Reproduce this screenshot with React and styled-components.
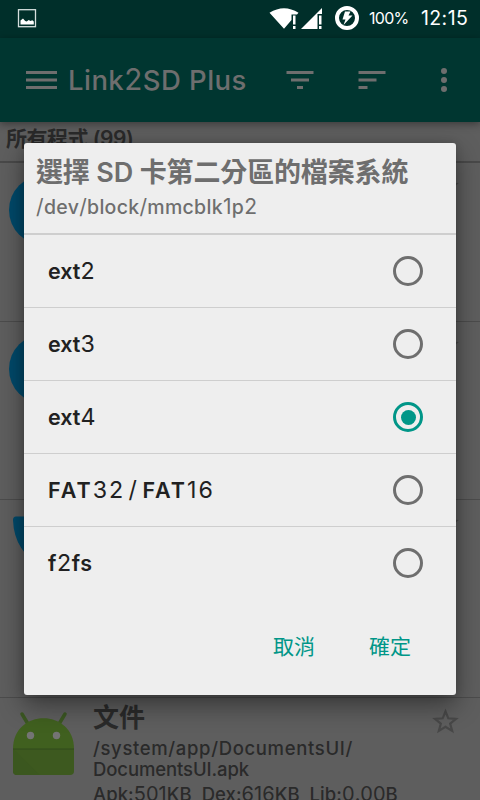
import React, { useState } from "react";
import styled, { createGlobalStyle } from "styled-components";

const GlobalStyle = createGlobalStyle`
  * {
    box-sizing: border-box;
  }
  body {
    margin: 0;
    overflow: hidden;
    font-family: Inter, "Noto Sans CJK TC", sans-serif;
  }
`;

const Screen = styled.div`
  position: relative;
  width: 480px;
  height: 800px;
  overflow: hidden;
  background: #5e5e5e;
`;

const StatusBar = styled.div`
  height: 38px;
  display: flex;
  align-items: center;
  padding: 0 11px 2px 17px;
  background: #002f2a;
  color: #fff;
`;

const StatusIcons = styled.div`
  display: flex;
  flex: 1;
  justify-content: flex-end;
  margin-right: 10px;
`;

const Battery = styled.span`
  width: 40px;
  margin-right: 12px;
  font-size: 16px;
  letter-spacing: -0.7px;
  white-space: nowrap;
`;

const Clock = styled.span`
  width: 48px;
  font-size: 19.5px;
  letter-spacing: 0.4px;
  white-space: nowrap;
`;

const Toolbar = styled.div`
  position: relative;
  height: 84px;
  display: flex;
  align-items: center;
  padding: 0 22px 0 26px;
  background: #003630;
  color: #6e6e6e;
  box-shadow: 0 2px 8px rgba(0, 0, 0, 0.4);
`;

const AppTitle = styled.div`
  flex: 1;
  margin-left: 11px;
  font-size: 27.5px;
  font-weight: 500;
  letter-spacing: 0.45px;
  white-space: nowrap;
`;

const Actions = styled.div`
  display: flex;
  align-items: center;
  gap: 44px;
`;

// digits are taller and thinner than the letters
const Digits = styled.span`
  font-size: 1.08em;
  font-weight: 400;
  line-height: 0;
`;

const SectionTitle = styled.div`
  height: 41px;
  padding: 1px 6px 0;
  border-bottom: 2px solid #494949;
  color: #2a2a2a;
  font-size: 21px;
  font-weight: 600;
  line-height: 32px;
  letter-spacing: -0.5px;
`;

const AppRow = styled.div`
  height: ${(props) => props.$height};
  display: flex;
  align-items: flex-start;
  padding: 8px 21px 0 9px;
  border-bottom: 1px solid #4c4c4c;
`;

const AppInfo = styled.div`
  flex: 1;
  margin-left: 14px;
  color: #2a2a2a;
  white-space: nowrap;
`;

const AppName = styled.div`
  height: 34px;
  margin-top: -4px;
  font-size: 26px;
  font-weight: 600;
  line-height: 31px;
`;

const AppLine = styled.div`
  height: ${(props) => props.$height || "21px"};
  font-size: 18.5px;
  font-weight: 500;
  line-height: 24px;
  letter-spacing: ${(props) => props.$spacing};
  white-space: pre;
`;

const StarBox = styled.div`
  width: 28px;
  height: 28px;
`;

const Dialog = styled.div`
  position: absolute;
  top: 143px;
  left: 24px;
  width: 432px;
  height: 552px;
  display: flex;
  flex-direction: column;
  border-radius: 3px;
  background: #eee;
  box-shadow: 0 10px 26px rgba(0, 0, 0, 0.42), 0 0 8px rgba(0, 0, 0, 0.15);
`;

const DialogHeader = styled.div`
  height: 92px;
  padding: 9px 12px 0;
  border-bottom: 2px solid #cecece;
  color: #6e6e6e;
  white-space: nowrap;
`;

const DialogTitle = styled.div`
  height: 41px;
  font-size: 27px;
  font-weight: 600;
  line-height: 42px;
  letter-spacing: -0.15px;
`;

const DialogPath = styled.div`
  font-size: 19.5px;
  font-weight: 500;
  line-height: 28px;
  letter-spacing: 0.3px;
`;

const Option = styled.div`
  height: 73px;
  display: flex;
  align-items: center;
  justify-content: space-between;
  padding: 0 33px 0 24px;
  border-bottom: 1px solid ${(props) => (props.$last ? "transparent" : "#cecece")};
  color: #212121;
  font-size: 21.5px;
  font-weight: 600;
  letter-spacing: ${(props) => props.$spacing};
  word-spacing: -4px;
  white-space: pre;
`;

const Radio = styled.span`
  width: 30px;
  height: 30px;
  display: grid;
  place-items: center;
  border: 3px solid ${(props) => (props.$checked ? "#009688" : "#6e6e6e")};
  border-radius: 50%;

  &::after {
    content: "";
    width: 15px;
    height: 15px;
    border-radius: 50%;
    background: ${(props) => (props.$checked ? "#009688" : "transparent")};
  }
`;

const Buttons = styled.div`
  display: flex;
  justify-content: flex-end;
  gap: 54px;
  padding: 27px 45px 0 0;
`;

const Button = styled.button`
  padding: 0;
  border: 0;
  background: none;
  color: #009688;
  font: 400 21px/36px "Noto Sans CJK TC", sans-serif;
`;

function Label({ text }) {
  return (
    <span>
      {text.split(/([\d/]+)/).map((part, i) =>
        /[\d/]/.test(part) ? <Digits key={i}>{part}</Digits> : part
      )}
    </span>
  );
}

function PictureIcon() {
  return (
    <svg width="20" height="20" viewBox="0 -1 20 20">
      <rect x="1.5" y="0.7" width="17" height="17" fill="none" stroke="#d5dfde" strokeWidth="1.3" />
      <path d="M3.500 15.500V11.500L6 9.500l2.200 2.500 1.500.5 2-1.500 1.800 1 1.800-.8 1.500 1.300v3z" fill="#fff" />
    </svg>
  );
}

function SignalIcons() {
  return (
    <svg width="90" height="26" viewBox="269 5 90 26" fill="#fff">
      <path d="M269.500 12.800Q284 3.800 298.500 12.800L297 14.500H291.500V20L284 28.800z" />
      <rect x="293" y="15.500" width="2.500" height="9" />
      <rect x="293" y="26" width="2.500" height="3" />
      <path d="M301 29L322 8V14H317.500V29z" />
      <rect x="319" y="15.500" width="2.500" height="9" />
      <rect x="319" y="26" width="2.500" height="3" />
      <circle cx="347" cy="18" r="10" fill="none" stroke="#fff" strokeWidth="4" />
      <path d="M345 11.500H350.500L348.500 15.500H352.500L343.500 25L345.500 19.500H342.500z" />
    </svg>
  );
}

function MenuIcon() {
  return (
    <svg width="31" height="18" fill="#6e6e6e">
      <path d="M0 0h31v3H0zM0 7.500h31v3H0zM0 15h31v3H0z" />
    </svg>
  );
}

function FilterIcon() {
  return (
    <svg width="28" height="18" fill="#6e6e6e">
      <path d="M.5 0h27v3H.5zM5 7.500h18v3H5zM11 15h6v3H11z" />
    </svg>
  );
}

function SortIcon() {
  return (
    <svg width="28" height="18" fill="#6e6e6e">
      <path d="M.5 0h27v3H.5zM.5 7.500h18v3H.5zM.5 15h9v3H.5z" />
    </svg>
  );
}

function MoreIcon() {
  return (
    <svg width="28" height="24" fill="#6e6e6e">
      <circle cx="14" cy="3" r="3" />
      <circle cx="14" cy="12" r="3" />
      <circle cx="14" cy="21" r="3" />
    </svg>
  );
}

function StarIcon() {
  return (
    <StarBox>
      <svg width="28" height="28" viewBox="0 0 28 28">
        <path
          d="M14.500 5.500L17.300 12.300L25 12.900L19.200 17.700L21.200 24.900L14.500 20.900L7.800 24.900L9.800 17.700L4 12.900L11.700 12.300Z"
          fill="none"
          stroke="#484848"
          strokeWidth="2.200"
        />
      </svg>
    </StarBox>
  );
}

function BlueIcon() {
  return (
    <svg width="70" height="80">
      <circle cx="35" cy="39" r="35" fill="#00496a" />
    </svg>
  );
}

function ShieldIcon() {
  return (
    <svg width="70" height="80">
      <path d="M7 8.500H63Q66 8.500 65.500 13Q63 44 35 60Q5 44 4 12Q4 8.500 7 8.500z" fill="#00496a" />
    </svg>
  );
}

function AndroidIcon() {
  return (
    <svg width="70" height="80" viewBox="9 706 70 80">
      <path d="M22 714L28 724M65 714L59 724" stroke="#3b5722" strokeWidth="3.500" strokeLinecap="round" />
      <path d="M13 749C13 708 74 708 74 749z" fill="#40601f" />
      <path d="M13 749H74V771Q74 775 70 775H17Q13 775 13 771z" fill="#3d591f" />
      <path d="M13 749L40 775H17Q13 775 13 771z" fill="#3b571f" />
      <path d="M13 749H74" stroke="#304a1c" strokeWidth="1" />
      <circle cx="30.500" cy="735.500" r="3.700" fill="#747474" />
      <circle cx="56.500" cy="735.500" r="3.700" fill="#747474" />
    </svg>
  );
}

const options = [
  { name: "ext2", spacing: "0px" },
  { name: "ext3", spacing: "0px" },
  { name: "ext4", spacing: "0px" },
  { name: "FAT32 / FAT16", spacing: "2px" },
  { name: "f2fs", spacing: "0.6px" },
];

function App() {
  const [selected, setSelected] = useState("ext4");

  return (
    <Screen>
      <GlobalStyle />
      <StatusBar>
        <PictureIcon />
        <StatusIcons>
          <SignalIcons />
        </StatusIcons>
        <Battery>100%</Battery>
        <Clock>12:15</Clock>
      </StatusBar>
      <Toolbar>
        <MenuIcon />
        <AppTitle>
          <Label text="Link2SD Plus" />
        </AppTitle>
        <Actions>
          <FilterIcon />
          <SortIcon />
          <MoreIcon />
        </Actions>
      </Toolbar>
      <SectionTitle>所有程式 (99)</SectionTitle>
      <AppRow $height="159px">
        <BlueIcon />
        <AppInfo />
        <StarIcon />
      </AppRow>
      <AppRow $height="178px">
        <BlueIcon />
        <AppInfo />
        <StarIcon />
      </AppRow>
      <AppRow $height="198px">
        <ShieldIcon />
        <AppInfo />
        <StarIcon />
      </AppRow>
      <AppRow $height="198px">
        <AndroidIcon />
        <AppInfo>
          <AppName>文件</AppName>
          <AppLine $spacing="0.65px">/system/app/DocumentsUI/</AppLine>
          <AppLine $spacing="-0.1px" $height="25px">DocumentsUI.apk</AppLine>
          <AppLine $spacing="0.05px">
            <Label text="Apk:501KB  Dex:616KB  Lib:0.00B" />
          </AppLine>
        </AppInfo>
        <StarIcon />
      </AppRow>

      <Dialog>
        <DialogHeader>
          <DialogTitle>選擇 SD 卡第二分區的檔案系統</DialogTitle>
          <DialogPath>
            <Label text="/dev/block/mmcblk1p2" />
          </DialogPath>
        </DialogHeader>
        {options.map((option, i) => (
          <Option
            key={option.name}
            $spacing={option.spacing}
            $last={i === options.length - 1}
            onClick={() => setSelected(option.name)}
          >
            <Label text={option.name} />
            <Radio $checked={selected === option.name} />
          </Option>
        ))}
        <Buttons>
          <Button>取消</Button>
          <Button>確定</Button>
        </Buttons>
      </Dialog>
    </Screen>
  );
}

export default App;
